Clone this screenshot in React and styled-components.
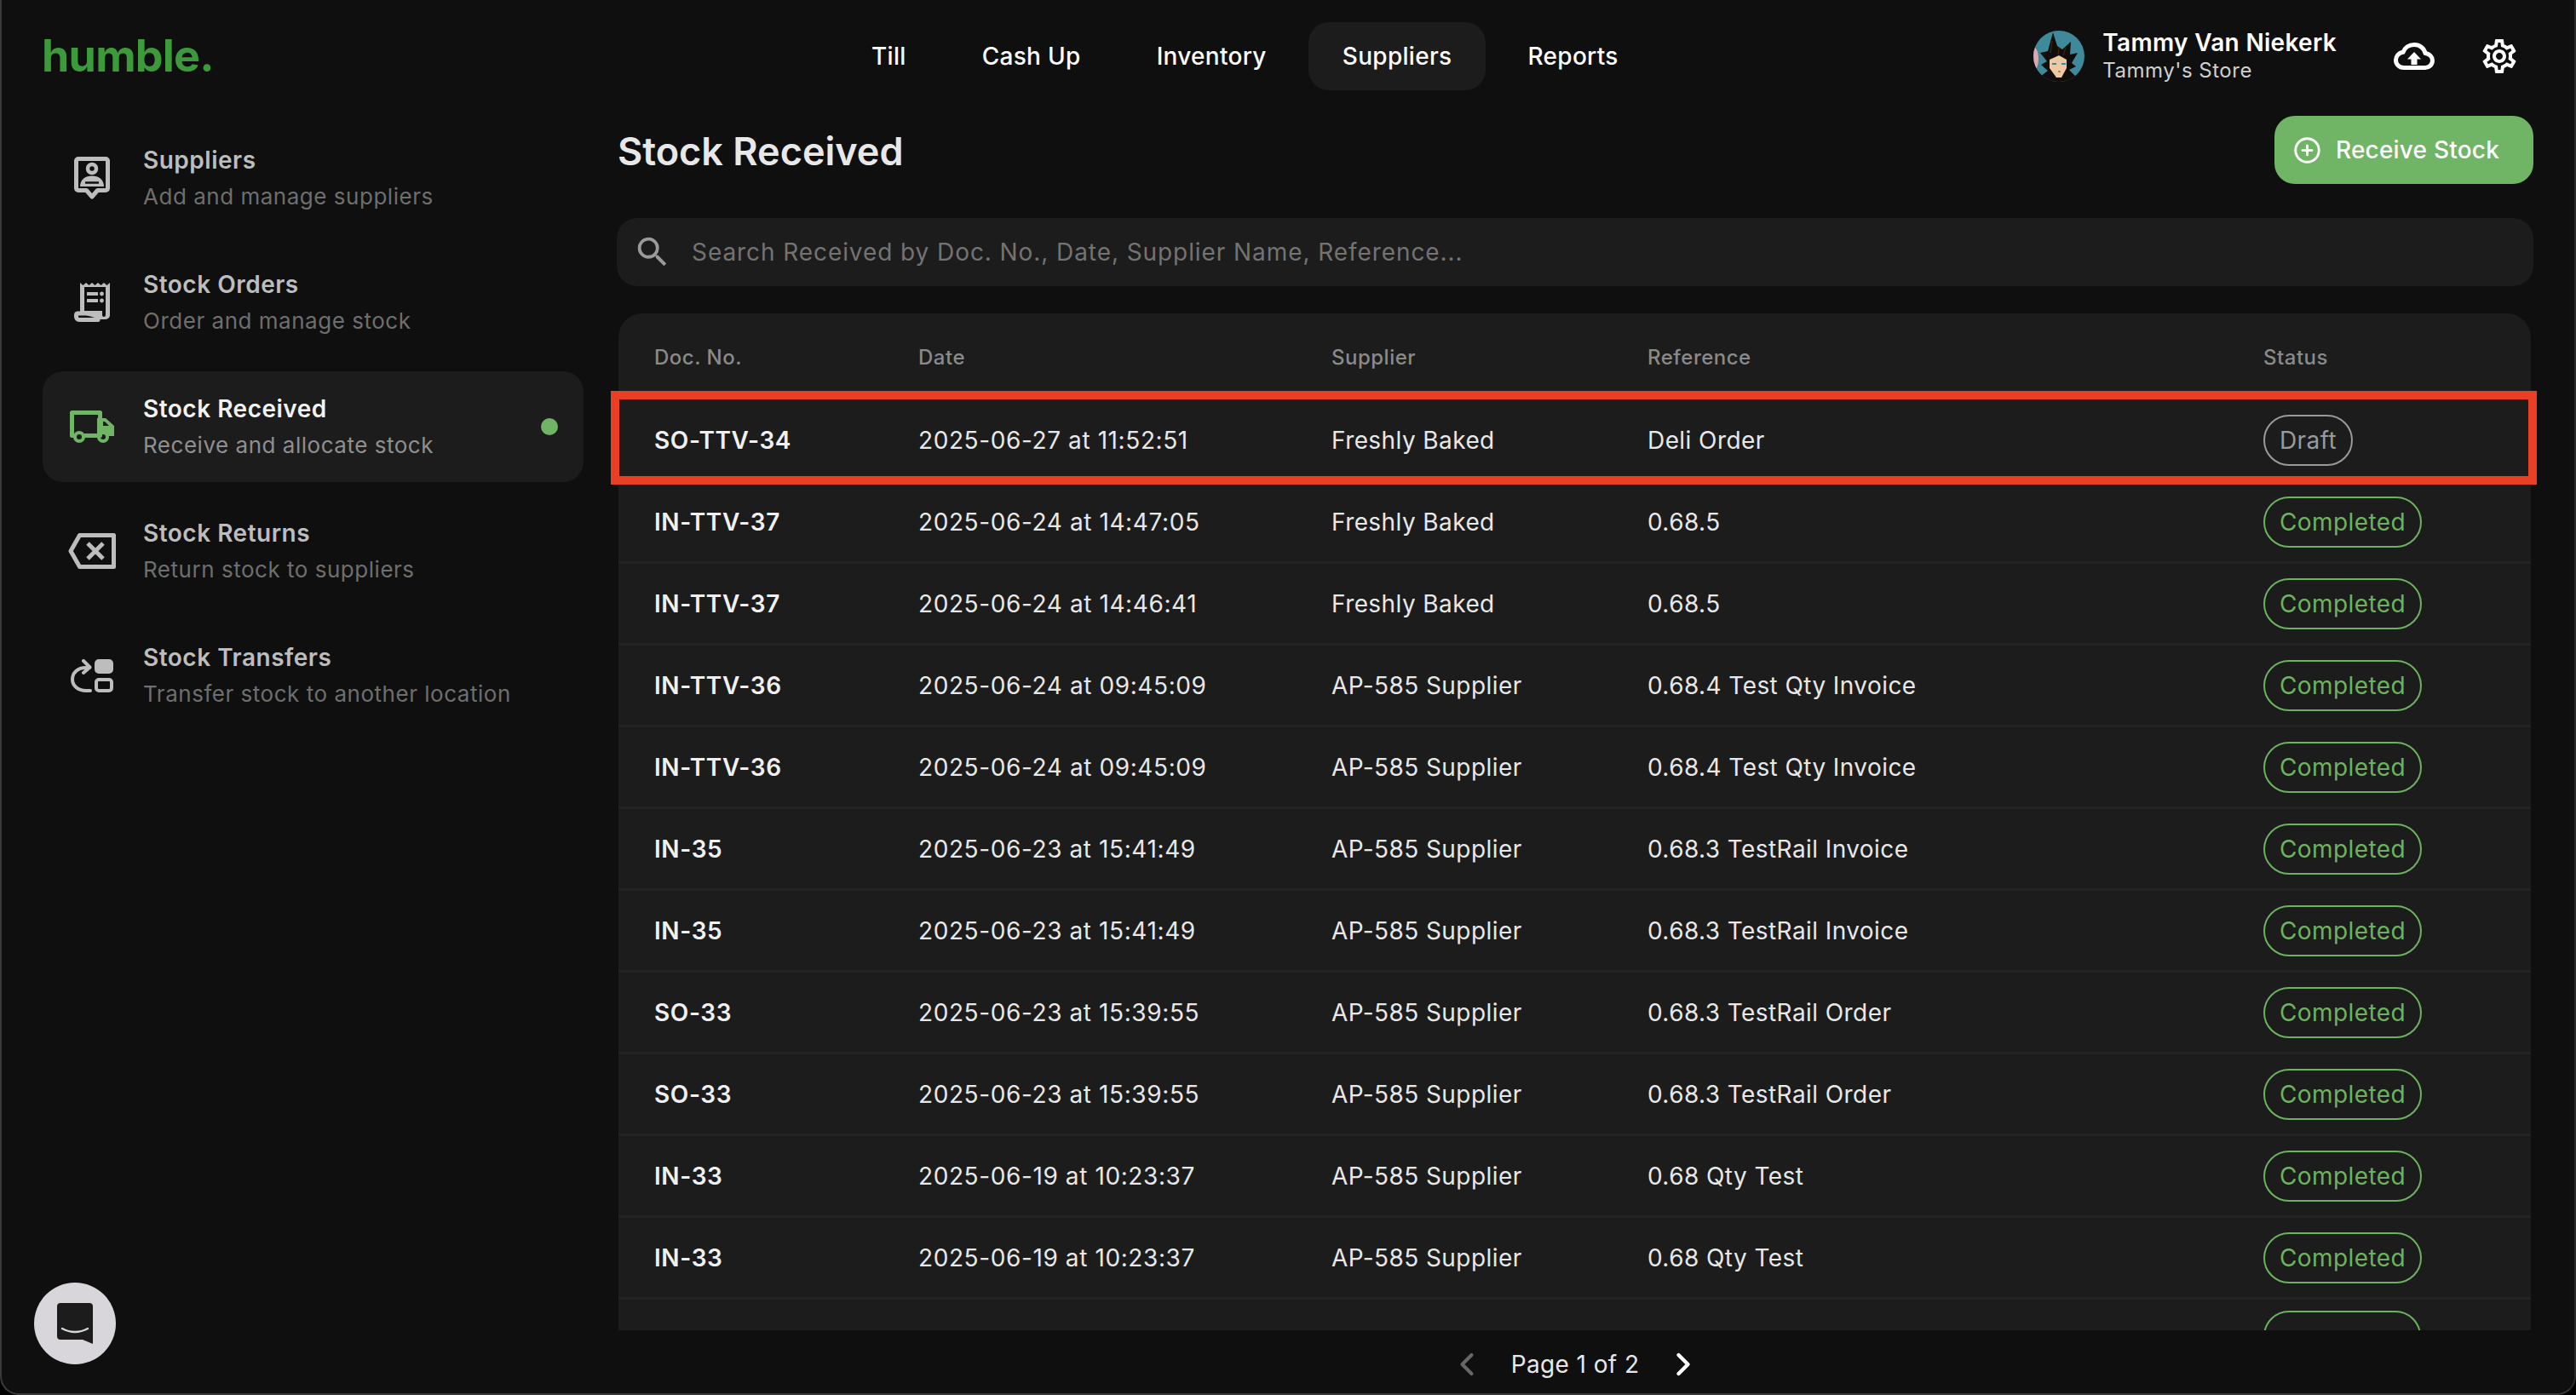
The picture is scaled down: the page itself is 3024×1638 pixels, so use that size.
import React from "react";
import styled, { createGlobalStyle } from "styled-components";
import { MdOutlineSettings, MdSearch } from "react-icons/md";
import { ChevronLeft, ChevronRight, CirclePlus } from "lucide-react";

const GlobalStyle = createGlobalStyle`
  html, body {
    margin: 0;
    padding: 0;
    background: #000;
  }
  * {
    box-sizing: border-box;
  }
  body {
    font-family: Inter, "Liberation Sans", sans-serif;
  }
`;

const Window = styled.div`
  display: flex;
  flex-direction: column;
  width: 3024px;
  height: 1638px;
  background: #0f0f0f;
  border: 2px solid #3a3a3a;
  border-top: none;
  border-right-color: #2a2a2a;
  border-radius: 0 0 22px 22px;
  overflow: hidden;
  position: relative;
`;

const Header = styled.header`
  display: flex;
  align-items: center;
  height: 132px;
  flex-shrink: 0;
  padding: 0 64px 0 47px;
`;

const Logo = styled.div`
  width: 199px;
  color: #3d9a3b;
  font-size: 52px;
  font-weight: 700;
  letter-spacing: -0.8px;
  line-height: 1;
`;

const Nav = styled.nav`
  display: flex;
  gap: 9px;
  margin-left: 735px;
`;

const NavItem = styled.div`
  display: flex;
  align-items: center;
  height: 80px;
  padding: 0 40px;
  border-radius: 24px;
  color: #fff;
  font-size: 28px;
  font-weight: 500;
  letter-spacing: 0.3px;
  background: ${(p) => (p.$active ? "#1c1c1c" : "transparent")};
`;

const UserBlock = styled.div`
  display: flex;
  align-items: center;
  gap: 21px;
  margin-left: auto;
`;

const Names = styled.div`
  display: flex;
  flex-direction: column;
  margin-top: -3px;
`;

const UserName = styled.div`
  color: #fff;
  font-size: 28px;
  font-weight: 600;
  line-height: 36px;
  letter-spacing: 0.3px;
`;

const StoreName = styled.div`
  color: #cfcfcf;
  font-size: 24px;
  line-height: 30px;
  letter-spacing: 0.5px;
`;

const HeaderIcons = styled.div`
  display: flex;
  align-items: center;
  gap: 52px;
  margin-left: 67px;
  color: #fff;
`;

const Body = styled.div`
  display: flex;
  flex: 1;
  min-height: 0;
`;

const Sidebar = styled.aside`
  display: flex;
  flex-direction: column;
  gap: 16px;
  width: 722px;
  flex-shrink: 0;
  padding: 12px 39px 0 48px;
`;

const SideItem = styled.div`
  display: flex;
  align-items: center;
  height: 130px;
  border-radius: 24px;
  background: ${(p) => (p.$active ? "#1c1c1c" : "transparent")};
  color: ${(p) => (p.$active ? "#70b466" : "#bdbdbd")};
`;

const SideIcon = styled.div`
  display: flex;
  justify-content: center;
  width: 116px;
  margin-right: 2px;
`;

const SideText = styled.div`
  display: flex;
  flex-direction: column;
  gap: 9px;
`;

const SideTitle = styled.div`
  color: ${(p) => (p.$active ? "#f2f2f2" : "#bdbdbd")};
  font-size: 28px;
  font-weight: 600;
  line-height: 34px;
  letter-spacing: 0.5px;
`;

const SideSub = styled.div`
  color: ${(p) => (p.$active ? "#8f8f8f" : "#6e6e6e")};
  font-size: 26px;
  line-height: 34px;
  letter-spacing: 0.52px;
`;

const ActiveDot = styled.span`
  width: 20px;
  height: 20px;
  margin-left: auto;
  margin-right: 30px;
  border-radius: 50%;
  background: #70b466;
`;

const ChatButton = styled.div`
  position: absolute;
  left: 38px;
  top: 1506px;
  display: flex;
  align-items: center;
  justify-content: center;
  width: 96px;
  height: 96px;
  border-radius: 50%;
  background: #d8d6db;
`;

const Main = styled.main`
  display: flex;
  flex: 1;
  flex-direction: column;
  min-width: 0;
  padding: 4px 48px 0 0;
`;

const TitleRow = styled.div`
  display: flex;
  align-items: center;
  justify-content: space-between;
  height: 80px;
  flex-shrink: 0;
`;

const PageTitle = styled.h1`
  margin: 2px 0 0 1px;
  color: #e8e8e8;
  font-size: 45px;
  font-weight: 600;
  line-height: 1;
`;

const ReceiveButton = styled.button`
  display: flex;
  align-items: center;
  gap: 17px;
  height: 80px;
  padding: 0 40px 0 22px;
  border: none;
  border-radius: 24px;
  background: #70b466;
  color: #fff;
  font-family: inherit;
  font-size: 28px;
  font-weight: 500;
  letter-spacing: 0.2px;
`;

const SearchBar = styled.div`
  display: flex;
  align-items: center;
  height: 80px;
  margin-top: 40px;
  padding-left: 19px;
  flex-shrink: 0;
  border-radius: 24px;
  background: #1c1c1c;
  color: #9a9a9a;
`;

const SearchText = styled.span`
  margin-left: 23px;
  color: #737373;
  font-size: 28px;
  letter-spacing: 0.92px;
`;

const TableWrap = styled.div`
  position: relative;
  flex: 1;
  min-height: 0;
  margin: 32px 3px 0 2px;
`;

const TableBody = styled.div`
  height: 100%;
  overflow: hidden;
  border-radius: 28px 28px 0 0;
  background: #1c1c1c;
`;

const Row = styled.div`
  display: grid;
  grid-template-columns: 310px 485px 371px 723px 1fr;
  align-items: center;
  padding-left: 42px;
`;

const HeadRow = styled(Row)`
  height: 102px;
  padding-top: 1px;
  color: #8a8a8a;
  font-size: 24px;
  font-weight: 500;
  letter-spacing: 0.5px;
`;

const DataRow = styled(Row)`
  height: 96px;
  border-bottom: 3px solid #232323;
  color: #e8e8e8;
  font-size: 28px;
  letter-spacing: 0.42px;
`;

const DocCell = styled.div`
  color: #f0f0f0;
  font-weight: 600;
  letter-spacing: 0.6px;
`;

const DateCell = styled.div`
  letter-spacing: 0.6px;
`;

const StatusPill = styled.span`
  display: inline-flex;
  align-items: center;
  height: 60px;
  padding: 0 17px;
  border: 2px solid ${(p) => (p.$draft ? "#9a9a9a" : "#6cb35f")};
  border-radius: 30px;
  color: ${(p) => (p.$draft ? "#9a9a9a" : "#6cb35f")};
  font-size: 28px;
  letter-spacing: 0.4px;
`;

const ClippedPill = styled(StatusPill)`
  width: 185px;
`;

const RedFrame = styled.div`
  position: absolute;
  top: 91px;
  left: -9px;
  right: -7px;
  height: 110px;
  border: 10px solid #e83f25;
  pointer-events: none;
`;

const Pagination = styled.div`
  display: flex;
  align-items: center;
  justify-content: center;
  gap: 30px;
  height: 74px;
  padding-top: 6px;
  flex-shrink: 0;
  color: #e8e8e8;
  font-size: 28px;
  letter-spacing: 0.4px;
`;

const PageArrow = styled.span`
  display: flex;
  color: ${(p) => (p.$disabled ? "#666" : "#fff")};
`;

const SupplierIcon = () => (
  <svg width="42" height="50" viewBox="0 0 42 50" fill="none">
    <path d="M5 2.500h32a2.500 2.500 0 0 1 2.500 2.500v32a2.500 2.500 0 0 1-2.500 2.500h-9.500L21 47l-6.500-7.500H5A2.500 2.500 0 0 1 2.500 37V5A2.500 2.500 0 0 1 5 2.500Z" stroke="currentColor" strokeWidth="5" strokeLinejoin="round" />
    <circle cx="21" cy="14" r="5" stroke="currentColor" strokeWidth="4.5" />
    <path d="M7 35c0-8 6-12.500 14-12.500S35 27 35 35Z" fill="currentColor" />
    <path d="M13 30.500h16" stroke="#0f0f0f" strokeWidth="2.500" />
  </svg>
);

const ReceiptIcon = () => (
  <svg width="42" height="46" viewBox="0 0 42 46" fill="none">
    <path d="M7 36V0l3.500 3L14 0l3.500 3L21 0l3.500 3L28 0l3.500 3L35 0l3.500 3L42 0v38a5 5 0 0 1-5 5H31" fill="currentColor" />
    <path d="M12 5h25v33a2 2 0 0 1-4 0v-5H12Z" fill="#0f0f0f" />
    <path d="M4 36h24v7.500H6A3.500 3.500 0 0 1 2.500 40v-2A2 2 0 0 1 4 36Z" stroke="currentColor" strokeWidth="5" strokeLinejoin="round" />
    <path d="M15 13h13M15 21h13" stroke="currentColor" strokeWidth="4" />
    <circle cx="32.500" cy="13" r="2.400" fill="currentColor" />
    <circle cx="32.500" cy="21" r="2.400" fill="currentColor" />
  </svg>
);

const TruckIcon = () => (
  <svg width="52" height="38" viewBox="0 0 52 38" fill="none">
    <path d="M5.500 29.500H2.500V2.500h33v27H17" stroke="currentColor" strokeWidth="5" strokeLinejoin="round" />
    <path d="M35 9h7l10 9v12h-7a6.500 6.500 0 0 0-12 0h-1V9Z" fill="currentColor" />
    <path d="M39 13h2l5 5h-7Z" fill="#1c1c1c" />
    <circle cx="11" cy="31" r="5" stroke="currentColor" strokeWidth="4" />
    <circle cx="39" cy="31" r="5" stroke="currentColor" strokeWidth="4" />
  </svg>
);

const BackspaceIcon = () => (
  <svg width="56" height="42" viewBox="0 0 56 42" fill="none">
    <path d="M3 21 13.500 2.500h40v37h-40Z" stroke="currentColor" strokeWidth="5" strokeLinejoin="round" />
    <path d="M23 12l18 18M41 12 23 30" stroke="currentColor" strokeWidth="5" />
  </svg>
);

const TransferIcon = () => (
  <svg width="50" height="39" viewBox="0 0 50 39" fill="none">
    <rect x="28" y="0" width="22" height="17" rx="5" fill="currentColor" />
    <rect x="30" y="24" width="18" height="13" rx="3" stroke="currentColor" strokeWidth="4" />
    <path d="M23 37h-5C8 37 2 31 2 23.500S8 10 18 10h4" stroke="currentColor" strokeWidth="4" strokeLinecap="round" />
    <path d="M15 2l7.500 7.500L15 16" stroke="currentColor" strokeWidth="4" strokeLinecap="round" strokeLinejoin="round" />
  </svg>
);

const CloudIcon = () => (
  <svg width="48" height="32" viewBox="0 0 48 32" fill="none">
    <path d="M12 29.500C6 29.500 2.500 25 2.500 20.500S6 11.800 11 11.300C13 5.800 18 2.500 24 2.500c7 0 12 4.500 13 10 4.700.4 8.500 4.200 8.500 8.500 0 5-4 8.500-8.500 8.500Z" stroke="currentColor" strokeWidth="5" strokeLinejoin="round" />
    <path d="M24 11l8 8.500h-4.500V26h-7v-6.500H16Z" fill="currentColor" />
  </svg>
);

const Avatar = () => (
  <svg width="60" height="60" viewBox="0 0 60 60">
    <defs>
      <clipPath id="avatarClip">
        <circle cx="30" cy="30" r="30" />
      </clipPath>
    </defs>
    <g clipPath="url(#avatarClip)">
      <rect width="60" height="60" fill="#3f8a9a" />
      <ellipse cx="1" cy="33" rx="5" ry="13" fill="#d9a9b0" />
      <path d="M23 2 28 18l6 4 10-9-1 15 9-2-7 12 5 4-8 4 10 10-14 4H22L8 54l9-7-8-7 7-4-8-10 9-2Z" fill="#120c0a" />
      <path d="M22 12 20 26M30 20l-1 8M38 20l-3 9" stroke="#3a2015" strokeWidth="1.5" />
      <path d="M19 34 30 29l9 5v10l-6 11h-6l-8-11Z" fill="#efc7a0" />
      <path d="M22 38h5v2h-5ZM33 38h5v2h-5Z" fill="#2f8fa0" />
      <path d="M29 48h3" stroke="#6b4a36" strokeWidth="1" />
    </g>
  </svg>
);

const ChatIcon = () => (
  <svg width="42" height="48" viewBox="0 0 42 48">
    <path d="M4 0h34a4 4 0 0 1 4 4v44l-12-5H4a4 4 0 0 1-4-4V4a4 4 0 0 1 4-4Z" fill="#1c1c1c" />
    <path d="M6 30q15 8 30 0" fill="none" stroke="#d8d6db" strokeWidth="2.500" strokeLinecap="round" />
  </svg>
);

const navItems = ["Till", "Cash Up", "Inventory", "Suppliers", "Reports"];

const sideItems = [
  { title: "Suppliers", sub: "Add and manage suppliers", Icon: SupplierIcon },
  { title: "Stock Orders", sub: "Order and manage stock", Icon: ReceiptIcon },
  { title: "Stock Received", sub: "Receive and allocate stock", Icon: TruckIcon, active: true },
  { title: "Stock Returns", sub: "Return stock to suppliers", Icon: BackspaceIcon },
  { title: "Stock Transfers", sub: "Transfer stock to another location", Icon: TransferIcon },
];

const rows = [
  ["SO-TTV-34", "2025-06-27 at 11:52:51", "Freshly Baked", "Deli Order", "Draft"],
  ["IN-TTV-37", "2025-06-24 at 14:47:05", "Freshly Baked", "0.68.5", "Completed"],
  ["IN-TTV-37", "2025-06-24 at 14:46:41", "Freshly Baked", "0.68.5", "Completed"],
  ["IN-TTV-36", "2025-06-24 at 09:45:09", "AP-585 Supplier", "0.68.4 Test Qty Invoice", "Completed"],
  ["IN-TTV-36", "2025-06-24 at 09:45:09", "AP-585 Supplier", "0.68.4 Test Qty Invoice", "Completed"],
  ["IN-35", "2025-06-23 at 15:41:49", "AP-585 Supplier", "0.68.3 TestRail Invoice", "Completed"],
  ["IN-35", "2025-06-23 at 15:41:49", "AP-585 Supplier", "0.68.3 TestRail Invoice", "Completed"],
  ["SO-33", "2025-06-23 at 15:39:55", "AP-585 Supplier", "0.68.3 TestRail Order", "Completed"],
  ["SO-33", "2025-06-23 at 15:39:55", "AP-585 Supplier", "0.68.3 TestRail Order", "Completed"],
  ["IN-33", "2025-06-19 at 10:23:37", "AP-585 Supplier", "0.68 Qty Test", "Completed"],
  ["IN-33", "2025-06-19 at 10:23:37", "AP-585 Supplier", "0.68 Qty Test", "Completed"],
];

export default function App() {
  return (
    <>
      <GlobalStyle />
      <Window>
        <Header>
          <Logo>humble.</Logo>
          <Nav>
            {navItems.map((item) => (
              <NavItem key={item} $active={item === "Suppliers"}>
                {item}
              </NavItem>
            ))}
          </Nav>
          <UserBlock>
            <Avatar />
            <Names>
              <UserName>Tammy Van Niekerk</UserName>
              <StoreName>Tammy's Store</StoreName>
            </Names>
          </UserBlock>
          <HeaderIcons>
            <CloudIcon />
            <MdOutlineSettings size={48} />
          </HeaderIcons>
        </Header>

        <Body>
          <Sidebar>
            {sideItems.map(({ title, sub, Icon, active }) => (
              <SideItem key={title} $active={active}>
                <SideIcon>
                  <Icon />
                </SideIcon>
                <SideText>
                  <SideTitle $active={active}>{title}</SideTitle>
                  <SideSub $active={active}>{sub}</SideSub>
                </SideText>
                {active && <ActiveDot />}
              </SideItem>
            ))}
          </Sidebar>

          <Main>
            <TitleRow>
              <PageTitle>Stock Received</PageTitle>
              <ReceiveButton>
                <CirclePlus size={33} strokeWidth={2.1} />
                Receive Stock
              </ReceiveButton>
            </TitleRow>

            <SearchBar>
              <MdSearch size={46} />
              <SearchText>Search Received by Doc. No., Date, Supplier Name, Reference...</SearchText>
            </SearchBar>

            <TableWrap>
              <TableBody>
                <HeadRow>
                  <div>Doc. No.</div>
                  <div>Date</div>
                  <div>Supplier</div>
                  <div>Reference</div>
                  <div>Status</div>
                </HeadRow>
                {rows.map((row, i) => (
                  <DataRow key={i}>
                    <DocCell>{row[0]}</DocCell>
                    <DateCell>{row[1]}</DateCell>
                    <div>{row[2]}</div>
                    <div>{row[3]}</div>
                    <div>
                      <StatusPill $draft={row[4] === "Draft"}>{row[4]}</StatusPill>
                    </div>
                  </DataRow>
                ))}
                {/* next row is cut by the table edge, only the pill's top shows */}
                <DataRow>
                  <div />
                  <div />
                  <div />
                  <div />
                  <div>
                    <ClippedPill />
                  </div>
                </DataRow>
              </TableBody>
              <RedFrame />
            </TableWrap>

            <Pagination>
              <PageArrow $disabled>
                <ChevronLeft size={44} strokeWidth={2.2} />
              </PageArrow>
              <span>Page 1 of 2</span>
              <PageArrow>
                <ChevronRight size={44} strokeWidth={2.4} />
              </PageArrow>
            </Pagination>
          </Main>
        </Body>

        <ChatButton>
          <ChatIcon />
        </ChatButton>
      </Window>
    </>
  );
}
